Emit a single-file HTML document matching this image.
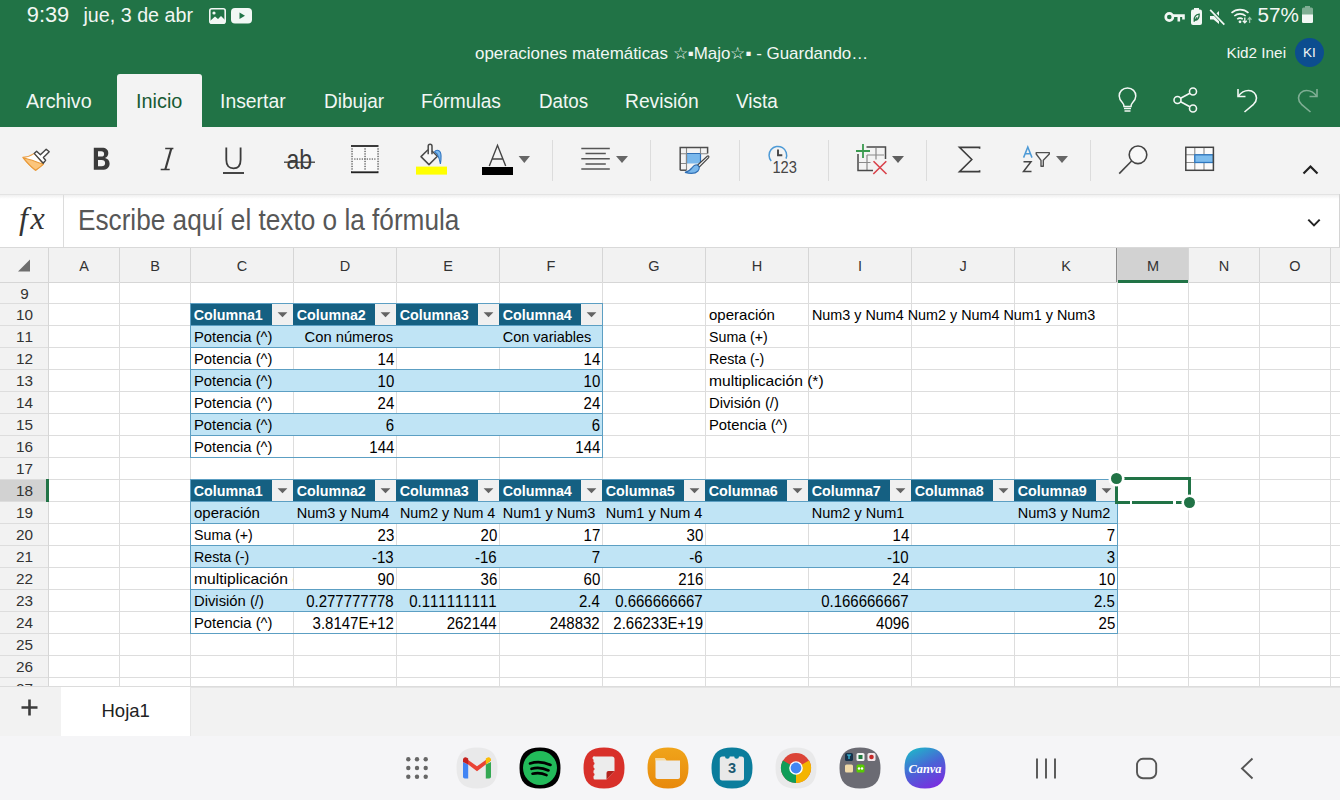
<!DOCTYPE html>
<html><head><meta charset="utf-8"><style>
html,body{margin:0;padding:0;width:1340px;height:800px;overflow:hidden;background:#fff;font-family:'Liberation Sans', sans-serif;}
</style></head><body>
<div style="position:absolute;left:0px;top:0px;width:1340px;height:127px;background:#217346"></div><div style="position:absolute;left:26.8px;top:4.25px;font-size:21.8px;line-height:21.8px;color:#f2f7f4;font-weight:400;white-space:pre;">9:39</div><div style="position:absolute;left:83.5px;top:5.92px;font-size:19.7px;line-height:19.7px;color:#f2f7f4;font-weight:400;white-space:pre;">jue, 3 de abr</div><svg style="position:absolute;left:209px;top:8px;" width="17" height="16" viewBox="0 0 17 16"><rect x="0.8" y="0.8" width="15.4" height="14.4" rx="2" fill="none" stroke="#f2f7f4" stroke-width="1.6"/><rect x="0.8" y="0.8" width="15.4" height="14.4" rx="2" fill="#f2f7f4" opacity="0"/><circle cx="5" cy="5" r="1.6" fill="#f2f7f4"/><path d="M1 13 L6 8.5 L9 11 L12 8 L16 12 V15 H1Z" fill="#f2f7f4"/></svg><svg style="position:absolute;left:231px;top:8px;" width="21" height="16" viewBox="0 0 21 16"><rect x="0" y="0" width="21" height="15.5" rx="4" fill="#f2f7f4"/><path d="M8.5 4.5 L14 7.75 L8.5 11Z" fill="#217346"/></svg><svg style="position:absolute;left:1164px;top:10px;" width="22" height="14" viewBox="0 0 22 14"><circle cx="5.3" cy="7" r="3.6" fill="none" stroke="#f2f7f4" stroke-width="2.6"/><path d="M8.6 5.6 H19.5 V9.5 M14.8 5.6 V11.6" fill="none" stroke="#f2f7f4" stroke-width="2.6"/></svg><svg style="position:absolute;left:1190px;top:8px;" width="13" height="18" viewBox="0 0 13 18"><rect x="1" y="1.6" width="11" height="15.4" rx="2" fill="#f2f7f4"/><rect x="4" y="0" width="5" height="2" fill="#f2f7f4"/><path d="M4.2 12.6 C4 8.6 6.3 6.6 9.2 6.2 C9.3 9.6 7.8 12 4.8 12.4 M3.8 13.6 L7.2 9.4" fill="none" stroke="#217346" stroke-width="1.3"/></svg><svg style="position:absolute;left:1209px;top:8px;" width="18" height="18" viewBox="0 0 18 18"><path d="M1 8 H4.5 L10 3 V16 L4.5 11.6 H1Z" fill="#f2f7f4"/><path d="M1.5 1.5 L15.5 16.5" stroke="#217346" stroke-width="3.4"/><path d="M1.2 1.8 L15.3 16.7" stroke="#f2f7f4" stroke-width="1.7"/></svg><svg style="position:absolute;left:1230px;top:7px;" width="23" height="17" viewBox="0 0 23 17"><path d="M1.5 5.8 A13 13 0 0 1 18.5 5.8" fill="none" stroke="#f2f7f4" stroke-width="1.6"/><path d="M4.3 9 A8.8 8.8 0 0 1 15.7 9" fill="none" stroke="#f2f7f4" stroke-width="1.6"/><path d="M7.2 12.2 A4.6 4.6 0 0 1 12.8 12.2" fill="none" stroke="#f2f7f4" stroke-width="1.6"/><circle cx="10" cy="14.8" r="1.4" fill="#f2f7f4"/><path d="M14.8 10.5 V16 M12.8 13.8 L14.8 15.9 L16.8 13.8" fill="none" stroke="#f2f7f4" stroke-width="1.3"/><path d="M19.6 16 V10.6 M17.7 12.6 L19.6 10.5 L21.5 12.6" fill="none" stroke="#9cc4ad" stroke-width="1.3"/></svg><div style="position:absolute;left:1257.5px;top:5.28px;font-size:20.7px;line-height:20.7px;color:#f2f7f4;font-weight:400;white-space:pre;">57%</div><svg style="position:absolute;left:1302px;top:6px;" width="12" height="17" viewBox="0 0 12 17"><rect x="0" y="1.5" width="11" height="15.5" rx="1.6" fill="#7fae93"/><rect x="3" y="0" width="5" height="2" fill="#7fae93"/><path d="M0 8.5 H11 V15.4 A1.6 1.6 0 0 1 9.4 17 H1.6 A1.6 1.6 0 0 1 0 15.4Z" fill="#f2f7f4"/></svg><div style="position:absolute;left:475px;top:46.05px;font-size:16.95px;line-height:16.95px;color:#f2f7f4;font-weight:400;white-space:pre;">operaciones matemáticas ☆▪Majo☆▪ - Guardando…</div><div style="position:absolute;left:1226.5px;top:44.85px;font-size:15.3px;line-height:15.3px;color:#f2f7f4;font-weight:400;white-space:pre;">Kid2 Inei</div><div style="position:absolute;left:1295px;top:38px;width:29px;height:29px;border-radius:50%;background:#0c4d8f"></div><div style="position:absolute;left:1295.0px;width:29px;top:45.97225px;font-size:13.5px;line-height:13.5px;color:#f2f7f4;font-weight:400;white-space:pre;text-align:center;">KI</div><div style="position:absolute;left:117px;top:74px;width:85px;height:53px;background:#f3f3f3;border-radius:3px 3px 0 0"></div><div style="position:absolute;left:26.2px;top:90.85px;font-size:20.5px;line-height:20.5px;color:#f2f7f4;font-weight:400;white-space:pre;transform:scaleX(0.960);transform-origin:0 0;">Archivo</div><div style="position:absolute;left:136.0px;top:90.85px;font-size:20.5px;line-height:20.5px;color:#175a34;font-weight:400;white-space:pre;transform:scaleX(0.969);transform-origin:0 0;">Inicio</div><div style="position:absolute;left:220.2px;top:90.85px;font-size:20.5px;line-height:20.5px;color:#f2f7f4;font-weight:400;white-space:pre;transform:scaleX(0.944);transform-origin:0 0;">Insertar</div><div style="position:absolute;left:323.7px;top:90.85px;font-size:20.5px;line-height:20.5px;color:#f2f7f4;font-weight:400;white-space:pre;transform:scaleX(0.926);transform-origin:0 0;">Dibujar</div><div style="position:absolute;left:420.9px;top:90.85px;font-size:20.5px;line-height:20.5px;color:#f2f7f4;font-weight:400;white-space:pre;transform:scaleX(0.935);transform-origin:0 0;">Fórmulas</div><div style="position:absolute;left:538.7px;top:90.85px;font-size:20.5px;line-height:20.5px;color:#f2f7f4;font-weight:400;white-space:pre;transform:scaleX(0.916);transform-origin:0 0;">Datos</div><div style="position:absolute;left:625.2px;top:90.85px;font-size:20.5px;line-height:20.5px;color:#f2f7f4;font-weight:400;white-space:pre;transform:scaleX(0.938);transform-origin:0 0;">Revisión</div><div style="position:absolute;left:736.2px;top:90.85px;font-size:20.5px;line-height:20.5px;color:#f2f7f4;font-weight:400;white-space:pre;transform:scaleX(0.923);transform-origin:0 0;">Vista</div><svg style="position:absolute;left:1117px;top:86px;" width="21" height="28" viewBox="0 0 21 28"><path d="M10.5 2 C5.5 2 2.2 5.6 2.2 10 C2.2 13 3.8 15 5.5 16.8 C6.5 17.9 7 19 7 20.5 H14 C14 19 14.5 17.9 15.5 16.8 C17.2 15 18.8 13 18.8 10 C18.8 5.6 15.5 2 10.5 2Z" fill="none" stroke="#f2f7f4" stroke-width="1.5"/><path d="M7 22.5 H14 M7.5 25 H13.5" stroke="#f2f7f4" stroke-width="1.6"/></svg><svg style="position:absolute;left:1172px;top:86px;" width="27" height="28" viewBox="0 0 27 28"><circle cx="5.5" cy="14" r="3.5" fill="none" stroke="#f2f7f4" stroke-width="1.6"/><circle cx="21" cy="5.5" r="3.5" fill="none" stroke="#f2f7f4" stroke-width="1.6"/><circle cx="21" cy="22.5" r="3.5" fill="none" stroke="#f2f7f4" stroke-width="1.6"/><path d="M8.6 12.3 L17.9 7.2 M8.6 15.7 L17.9 20.8" stroke="#f2f7f4" stroke-width="1.6"/></svg><svg style="position:absolute;left:1234px;top:86px;" width="26" height="28" viewBox="0 0 26 28"><path d="M4 3 V10.5 H11.5" fill="none" stroke="#f2f7f4" stroke-width="1.6"/><path d="M4.3 10.2 C7 6.5 10.5 4.5 14.5 4.5 C19 4.5 22.5 8 22.5 12 C22.5 14.5 21.5 16.3 19.5 18.3 L10.5 26" fill="none" stroke="#f2f7f4" stroke-width="1.6"/></svg><svg style="position:absolute;left:1295px;top:86px;" width="26" height="28" viewBox="0 0 26 28"><g opacity="0.45"><path d="M22 3 V10.5 H14.5" fill="none" stroke="#f2f7f4" stroke-width="1.6"/><path d="M21.7 10.2 C19 6.5 15.5 4.5 11.5 4.5 C7 4.5 3.5 8 3.5 12 C3.5 14.5 4.5 16.3 6.5 18.3 L15.5 26" fill="none" stroke="#f2f7f4" stroke-width="1.6"/></g></svg><div style="position:absolute;left:0px;top:127px;width:1340px;height:67px;background:#f3f3f3"></div><svg style="position:absolute;left:15px;top:140px;" width="40" height="40" viewBox="0 0 40 40">
<path d="M19.3 13.4 C15.5 16 11.5 17.2 7.8 17.4 C11.5 22 15.5 26.5 20.6 30.2 C23 28.5 25.8 26.5 28.4 24.2 Z" fill="#fff" stroke="#eaa24c" stroke-width="1.1" stroke-linejoin="round"/>
<path d="M8.4 17.8 C15 19.5 21.5 21.8 28.2 24.3 C25.8 26.5 23 28.5 20.6 30.2 C15.5 26.5 11.8 22.2 8.4 17.8 Z" fill="#fbc57c" stroke="#e99a3a" stroke-width="1.1" stroke-linejoin="round"/>
<path d="M19.2 13.4 L21.6 11.2 L25.4 14.8 L31.2 9.2 L34.2 11.8 L28.4 17.5 L30.6 20.2 L28.2 23.2 Z" fill="#fff" stroke="#444" stroke-width="1.4" stroke-linejoin="round"/>
</svg><svg style="position:absolute;left:93px;top:147px;" width="18" height="24" viewBox="0 0 18 24"><path fill-rule="evenodd" fill="#3b3b3b" d="M0.8 0.8 H9 C13 0.8 15.3 2.8 15.3 6.2 C15.3 8.5 14 10.2 12 10.9 C14.6 11.4 16.6 13.4 16.6 16.4 C16.6 20.5 13.7 22.8 9.2 22.8 H0.8 Z M5 4.3 V9.6 H8.2 C10.2 9.6 11.1 8.6 11.1 6.9 C11.1 5.2 10.2 4.3 8.2 4.3 Z M5 13 V19.3 H8.6 C10.9 19.3 12.1 18.2 12.1 16.1 C12.1 14.1 10.9 13 8.6 13 Z"/></svg><svg style="position:absolute;left:158px;top:146px;" width="20" height="26" viewBox="0 0 20 26"><path d="M7.2 2.4 H15.4 M2.7 23.4 H11.7" stroke="#3b3b3b" stroke-width="1.5"/><path d="M12.2 2.4 L14.4 2.4 L8.4 23.4 L6.2 23.4 Z" fill="#3b3b3b"/></svg><svg style="position:absolute;left:222px;top:146px;" width="24" height="30" viewBox="0 0 24 30"><path d="M4.3 1.5 V13.8 C4.3 19.5 7 22.4 11.5 22.4 C16 22.4 18.6 19.5 18.6 13.8 V1.5" fill="none" stroke="#3b3b3b" stroke-width="1.8"/><path d="M1 27 H22" stroke="#3b3b3b" stroke-width="1.9"/></svg><svg style="position:absolute;left:282px;top:146px;" width="36" height="26" viewBox="0 0 36 26"><text x="4.4" y="23.4" font-family="Liberation Sans" font-size="27.5" fill="#3b3b3b" textLength="25.6" lengthAdjust="spacingAndGlyphs">ab</text><path d="M2 16.2 H33" stroke="#3b3b3b" stroke-width="1.3"/></svg><svg style="position:absolute;left:351px;top:145px;" width="29" height="30" viewBox="0 0 29 30"><rect x="0" y="0" width="27.5" height="2" fill="#3a3a3a"/><rect x="0" y="26.2" width="27.5" height="2" fill="#222"/><rect x="1.2" y="2" width="25" height="24.2" fill="#f9f9f9"/><rect x="0.4" y="3.3" width="1.3" height="1.3" fill="#555"/><rect x="0.4" y="5.8" width="1.3" height="1.3" fill="#555"/><rect x="0.4" y="8.3" width="1.3" height="1.3" fill="#555"/><rect x="0.4" y="10.8" width="1.3" height="1.3" fill="#555"/><rect x="0.4" y="13.3" width="1.3" height="1.3" fill="#555"/><rect x="0.4" y="15.8" width="1.3" height="1.3" fill="#555"/><rect x="0.4" y="18.3" width="1.3" height="1.3" fill="#555"/><rect x="0.4" y="20.8" width="1.3" height="1.3" fill="#555"/><rect x="0.4" y="23.3" width="1.3" height="1.3" fill="#555"/><rect x="13.4" y="3.3" width="1.3" height="1.3" fill="#555"/><rect x="13.4" y="5.8" width="1.3" height="1.3" fill="#555"/><rect x="13.4" y="8.3" width="1.3" height="1.3" fill="#555"/><rect x="13.4" y="10.8" width="1.3" height="1.3" fill="#555"/><rect x="13.4" y="13.3" width="1.3" height="1.3" fill="#555"/><rect x="13.4" y="15.8" width="1.3" height="1.3" fill="#555"/><rect x="13.4" y="18.3" width="1.3" height="1.3" fill="#555"/><rect x="13.4" y="20.8" width="1.3" height="1.3" fill="#555"/><rect x="13.4" y="23.3" width="1.3" height="1.3" fill="#555"/><rect x="26.4" y="3.3" width="1.3" height="1.3" fill="#555"/><rect x="26.4" y="5.8" width="1.3" height="1.3" fill="#555"/><rect x="26.4" y="8.3" width="1.3" height="1.3" fill="#555"/><rect x="26.4" y="10.8" width="1.3" height="1.3" fill="#555"/><rect x="26.4" y="13.3" width="1.3" height="1.3" fill="#555"/><rect x="26.4" y="15.8" width="1.3" height="1.3" fill="#555"/><rect x="26.4" y="18.3" width="1.3" height="1.3" fill="#555"/><rect x="26.4" y="20.8" width="1.3" height="1.3" fill="#555"/><rect x="26.4" y="23.3" width="1.3" height="1.3" fill="#555"/><rect x="3.2" y="13.4" width="1.3" height="1.3" fill="#666"/><rect x="5.7" y="13.4" width="1.3" height="1.3" fill="#666"/><rect x="8.2" y="13.4" width="1.3" height="1.3" fill="#666"/><rect x="10.7" y="13.4" width="1.3" height="1.3" fill="#666"/><rect x="13.2" y="13.4" width="1.3" height="1.3" fill="#666"/><rect x="15.7" y="13.4" width="1.3" height="1.3" fill="#666"/><rect x="18.2" y="13.4" width="1.3" height="1.3" fill="#666"/><rect x="20.7" y="13.4" width="1.3" height="1.3" fill="#666"/><rect x="23.2" y="13.4" width="1.3" height="1.3" fill="#666"/></svg><svg style="position:absolute;left:410px;top:140px;" width="40" height="40" viewBox="0 0 40 40">
<path d="M18 9.8 L11 16.6 L19 24.6 L27.4 16.2 L22 11" fill="#f7f7f7" stroke="#4a4a4a" stroke-width="1.5" stroke-linejoin="round"/>
<path d="M18.2 14.2 V6.2 A1.9 1.9 0 0 1 22 6.2 V14.2" fill="none" stroke="#4a4a4a" stroke-width="1.5"/>
<path d="M24.6 11.8 C26 9.6 28.8 9.8 30.2 12 C31.4 14 31.2 19 30.4 24 C29.8 20 28.6 16.5 27.2 14.2 Z" fill="#7cb9ee" stroke="#2f74c0" stroke-width="1.1"/>
<rect x="6" y="26.6" width="31" height="8" fill="#ffff00"/>
</svg><svg style="position:absolute;left:480px;top:140px;" width="54" height="40" viewBox="0 0 54 40"><path d="M9.3 26 L17.5 5.3 L25.7 26 M12.3 19 H22.7" fill="none" stroke="#444" stroke-width="1.4"/><rect x="2" y="27" width="31" height="8" fill="#000"/><path d="M38.6 16 H50 L44.3 23 Z" fill="#666"/></svg><div style="position:absolute;left:552px;top:140px;width:1px;height:41px;background:#dcdcdc"></div><div style="position:absolute;left:650px;top:140px;width:1px;height:41px;background:#dcdcdc"></div><div style="position:absolute;left:739px;top:140px;width:1px;height:41px;background:#dcdcdc"></div><div style="position:absolute;left:828px;top:140px;width:1px;height:41px;background:#dcdcdc"></div><div style="position:absolute;left:926px;top:140px;width:1px;height:41px;background:#dcdcdc"></div><div style="position:absolute;left:1090px;top:140px;width:1px;height:41px;background:#dcdcdc"></div><svg style="position:absolute;left:578px;top:140px;" width="54" height="40" viewBox="0 0 54 40"><g stroke="#555" stroke-width="1.5"><path d="M3.3 8.5 H31.8 M7.5 13.6 H27.8 M3.3 18.8 H31.8 M7.5 23.9 H27.8 M3.3 28.9 H31.8"/></g><path d="M38 16 H50 L44 23 Z" fill="#666"/></svg><svg style="position:absolute;left:675px;top:140px;" width="40" height="40" viewBox="0 0 40 40">
<rect x="11.5" y="13.5" width="14" height="10" fill="#7ab8ec"/>
<path d="M11.5 23.5 V13.5 H25.5 V23.5" fill="none" stroke="#2f6fb5" stroke-width="1.2"/>
<path d="M5.2 13.8 H11.5 M5.2 23.5 H11.5 M25.5 13.8 H32.5 M11.5 7.8 V30 M25.5 7.8 V13.5" stroke="#888" stroke-width="1.1"/>
<path d="M5.2 30.2 V7.6 H32.6 V13.6" fill="none" stroke="#4d4d4d" stroke-width="1.5"/>
<path d="M5.2 30.2 H11.5" stroke="#4d4d4d" stroke-width="1.5"/>
<path d="M32.2 16.2 C33.4 15.4 34.4 16.4 33.6 17.6 L24.4 27 L22.4 25.2 Z" fill="#fafafa" stroke="#444" stroke-width="1.2"/>
<path d="M22 25 C24.5 26 25 28.5 23 31 C20.5 33.6 15 33.8 10 32.4 C13.5 31.6 15.6 29.8 17.4 27.4 C18.8 25.4 20.4 24.6 22 25 Z" fill="#7ab8ec" stroke="#2f6fb5" stroke-width="1.1"/>
</svg><svg style="position:absolute;left:760px;top:140px;" width="40" height="40" viewBox="0 0 40 40">
<path d="M11.2 21 A8.8 8.8 0 1 1 26 18.6" fill="none" stroke="#4d9ad6" stroke-width="1.5"/>
<path d="M18 9.5 V15.2 H22.3" fill="none" stroke="#454545" stroke-width="1.9"/>
<text x="12.4" y="33" font-family="Liberation Sans" font-size="17" fill="#454545" textLength="24.5" lengthAdjust="spacingAndGlyphs">123</text>
</svg><svg style="position:absolute;left:850px;top:140px;" width="60" height="40" viewBox="0 0 60 40">
<path d="M17 15 H34 M17 15 V30 M26 8 V19.5 M9 22.5 H20.5" stroke="#8a8a8a" stroke-width="1.2"/>
<path d="M16.5 7 H35.5 V19 M8 14 V30.5 H23" fill="none" stroke="#4a4a4a" stroke-width="1.5"/>
<path d="M6 11 H20 M13 4 V18" stroke="#3a9a4f" stroke-width="1.8"/>
<path d="M23.5 21.2 L36.5 34 M36.3 21.2 L23.3 34" stroke="#d9414a" stroke-width="1.6"/>
<path d="M42 16 H54 L48 23 Z" fill="#5f5f5f"/>
</svg><svg style="position:absolute;left:950px;top:140px;" width="40" height="40" viewBox="0 0 40 40"><path d="M29.6 8.7 V7.4 H9.5 L21.8 19.5 L9.5 31.6 H29.6 V30.2" fill="none" stroke="#3d3d3d" stroke-width="1.6" stroke-linejoin="miter"/></svg><svg style="position:absolute;left:1015px;top:140px;" width="60" height="40" viewBox="0 0 60 40">
<path d="M8.6 17.6 L12.8 7 L17 17.6 M10.2 13.8 H15.4" fill="none" stroke="#4d9ad6" stroke-width="1.5"/>
<path d="M8.5 21.7 H16 L8.5 31.6 H16.5" fill="none" stroke="#454545" stroke-width="1.5"/>
<path d="M21.2 12.6 H34.3 V14 L28.3 20.3 V26.3 H26 V20.3 L21.2 14 Z" fill="#f8f8f8" stroke="#505050" stroke-width="1.4" stroke-linejoin="round"/>
<path d="M41 16 H53 L47 23 Z" fill="#666"/>
</svg><svg style="position:absolute;left:1110px;top:140px;" width="50" height="40" viewBox="0 0 50 40"><circle cx="28" cy="14.8" r="8.8" fill="#f8f8f8" stroke="#444" stroke-width="1.6"/><path d="M21.6 21 L9.2 33.6" stroke="#444" stroke-width="1.6"/></svg><svg style="position:absolute;left:1175px;top:140px;" width="50" height="40" viewBox="0 0 50 40">
<rect x="10.8" y="7.3" width="27.6" height="23" fill="#fbfbfb"/>
<path d="M10.8 14.8 H38.4 M10.8 22.5 H38.4 M19.8 7.3 V30.3 M29 7.3 V30.3" stroke="#8c8c8c" stroke-width="1.1"/>
<rect x="19.8" y="14.8" width="18.6" height="7.7" fill="#7ebdee" stroke="#2f78c0" stroke-width="1.3"/>
<rect x="10.8" y="7.3" width="27.6" height="23" fill="none" stroke="#444" stroke-width="1.5"/>
</svg><svg style="position:absolute;left:1300px;top:162px;" width="22" height="14" viewBox="0 0 22 14"><path d="M3.5 11.5 L10.5 4.5 L17.5 11.5" fill="none" stroke="#222" stroke-width="2.2"/></svg><div style="position:absolute;left:0px;top:194px;width:1340px;height:54px;background:#fff;border-top:1px solid #e3e3e3;box-sizing:border-box"></div><div style="position:absolute;left:0px;top:195px;width:1340px;height:4px;background:linear-gradient(#f0f0f0,#fff)"></div><div style="position:absolute;left:63px;top:195px;width:1px;height:52px;background:#dcdcdc"></div><div style="position:absolute;left:1339px;top:194px;width:1px;height:54px;background:#d4d4d4"></div><div style="position:absolute;left:19px;top:200.5px;font-family:'Liberation Serif',serif;font-style:italic;font-size:32px;line-height:34px;color:#333;letter-spacing:2.5px">fx</div><div style="position:absolute;left:77.9px;top:205.75px;font-size:29px;line-height:29px;color:#575757;font-weight:400;white-space:pre;transform:scaleX(0.903);transform-origin:0 0;">Escribe aquí el texto o la fórmula</div><svg style="position:absolute;left:1304px;top:215px;" width="20" height="14" viewBox="0 0 20 14"><path d="M4.3 4.6 L10 10.4 L15.7 4.6" fill="none" stroke="#222" stroke-width="2"/></svg><div style="position:absolute;left:0px;top:248px;width:1340px;height:438px;background:#fff"></div><div style="position:absolute;left:0px;top:248px;width:1340px;height:34px;background:#f2f2f2"></div><div style="position:absolute;left:0px;top:247px;width:1340px;height:1px;background:#d9d9d9"></div><div style="position:absolute;left:0px;top:282px;width:1340px;height:1px;background:#d6d6d6"></div><div style="position:absolute;left:0px;top:283px;width:48px;height:403px;background:#f2f2f2"></div><div style="position:absolute;left:1117px;top:248px;width:71px;height:34px;background:#d2d2d2"></div><div style="position:absolute;left:1116px;top:248px;width:2px;height:34px;background:#8c8c8c"></div><div style="position:absolute;left:1117px;top:280px;width:71px;height:3px;background:#217346"></div><div style="position:absolute;left:0px;top:480px;width:48px;height:21px;background:#d2d2d2"></div><div style="position:absolute;left:48px;top:248px;width:1px;height:438px;background:#dddddd"></div><div style="position:absolute;left:119px;top:248px;width:1px;height:438px;background:#dddddd"></div><div style="position:absolute;left:190px;top:248px;width:1px;height:438px;background:#dddddd"></div><div style="position:absolute;left:293px;top:248px;width:1px;height:438px;background:#dddddd"></div><div style="position:absolute;left:396px;top:248px;width:1px;height:438px;background:#dddddd"></div><div style="position:absolute;left:499px;top:248px;width:1px;height:438px;background:#dddddd"></div><div style="position:absolute;left:602px;top:248px;width:1px;height:438px;background:#dddddd"></div><div style="position:absolute;left:705px;top:248px;width:1px;height:438px;background:#dddddd"></div><div style="position:absolute;left:808px;top:248px;width:1px;height:438px;background:#dddddd"></div><div style="position:absolute;left:911px;top:248px;width:1px;height:438px;background:#dddddd"></div><div style="position:absolute;left:1014px;top:248px;width:1px;height:438px;background:#dddddd"></div><div style="position:absolute;left:1117px;top:248px;width:1px;height:438px;background:#dddddd"></div><div style="position:absolute;left:1188px;top:248px;width:1px;height:438px;background:#dddddd"></div><div style="position:absolute;left:1259px;top:248px;width:1px;height:438px;background:#dddddd"></div><div style="position:absolute;left:1330px;top:248px;width:1px;height:438px;background:#dddddd"></div><div style="position:absolute;left:48px;top:248px;width:1px;height:34px;background:#d6d6d6"></div><div style="position:absolute;left:119px;top:248px;width:1px;height:34px;background:#d6d6d6"></div><div style="position:absolute;left:190px;top:248px;width:1px;height:34px;background:#d6d6d6"></div><div style="position:absolute;left:293px;top:248px;width:1px;height:34px;background:#d6d6d6"></div><div style="position:absolute;left:396px;top:248px;width:1px;height:34px;background:#d6d6d6"></div><div style="position:absolute;left:499px;top:248px;width:1px;height:34px;background:#d6d6d6"></div><div style="position:absolute;left:602px;top:248px;width:1px;height:34px;background:#d6d6d6"></div><div style="position:absolute;left:705px;top:248px;width:1px;height:34px;background:#d6d6d6"></div><div style="position:absolute;left:808px;top:248px;width:1px;height:34px;background:#d6d6d6"></div><div style="position:absolute;left:911px;top:248px;width:1px;height:34px;background:#d6d6d6"></div><div style="position:absolute;left:1014px;top:248px;width:1px;height:34px;background:#d6d6d6"></div><div style="position:absolute;left:1117px;top:248px;width:1px;height:34px;background:#d6d6d6"></div><div style="position:absolute;left:1188px;top:248px;width:1px;height:34px;background:#d6d6d6"></div><div style="position:absolute;left:1259px;top:248px;width:1px;height:34px;background:#d6d6d6"></div><div style="position:absolute;left:1330px;top:248px;width:1px;height:34px;background:#d6d6d6"></div><div style="position:absolute;left:0px;top:303px;width:1340px;height:1px;background:#dddddd"></div><div style="position:absolute;left:0px;top:325px;width:1340px;height:1px;background:#dddddd"></div><div style="position:absolute;left:0px;top:347px;width:1340px;height:1px;background:#dddddd"></div><div style="position:absolute;left:0px;top:369px;width:1340px;height:1px;background:#dddddd"></div><div style="position:absolute;left:0px;top:391px;width:1340px;height:1px;background:#dddddd"></div><div style="position:absolute;left:0px;top:413px;width:1340px;height:1px;background:#dddddd"></div><div style="position:absolute;left:0px;top:435px;width:1340px;height:1px;background:#dddddd"></div><div style="position:absolute;left:0px;top:457px;width:1340px;height:1px;background:#dddddd"></div><div style="position:absolute;left:0px;top:479px;width:1340px;height:1px;background:#dddddd"></div><div style="position:absolute;left:0px;top:501px;width:1340px;height:1px;background:#dddddd"></div><div style="position:absolute;left:0px;top:523px;width:1340px;height:1px;background:#dddddd"></div><div style="position:absolute;left:0px;top:545px;width:1340px;height:1px;background:#dddddd"></div><div style="position:absolute;left:0px;top:567px;width:1340px;height:1px;background:#dddddd"></div><div style="position:absolute;left:0px;top:589px;width:1340px;height:1px;background:#dddddd"></div><div style="position:absolute;left:0px;top:611px;width:1340px;height:1px;background:#dddddd"></div><div style="position:absolute;left:0px;top:633px;width:1340px;height:1px;background:#dddddd"></div><div style="position:absolute;left:0px;top:655px;width:1340px;height:1px;background:#dddddd"></div><div style="position:absolute;left:0px;top:677px;width:1340px;height:1px;background:#dddddd"></div><div style="position:absolute;left:48px;top:248px;width:1px;height:438px;background:#d6d6d6"></div><div style="position:absolute;left:46px;top:479px;width:3px;height:23px;background:#217346"></div><svg style="position:absolute;left:17px;top:259px;" width="14" height="13" viewBox="0 0 14 13"><path d="M13 0.5 V12.5 H1 Z" fill="#6e6e6e"/></svg><div style="position:absolute;left:54.0px;width:60px;top:258.72575px;font-size:14.5px;line-height:14.5px;color:#333;font-weight:400;white-space:pre;text-align:center;">A</div><div style="position:absolute;left:125.0px;width:60px;top:258.72575px;font-size:14.5px;line-height:14.5px;color:#333;font-weight:400;white-space:pre;text-align:center;">B</div><div style="position:absolute;left:212.0px;width:60px;top:258.72575px;font-size:14.5px;line-height:14.5px;color:#333;font-weight:400;white-space:pre;text-align:center;">C</div><div style="position:absolute;left:315.0px;width:60px;top:258.72575px;font-size:14.5px;line-height:14.5px;color:#333;font-weight:400;white-space:pre;text-align:center;">D</div><div style="position:absolute;left:418.0px;width:60px;top:258.72575px;font-size:14.5px;line-height:14.5px;color:#333;font-weight:400;white-space:pre;text-align:center;">E</div><div style="position:absolute;left:521.0px;width:60px;top:258.72575px;font-size:14.5px;line-height:14.5px;color:#333;font-weight:400;white-space:pre;text-align:center;">F</div><div style="position:absolute;left:624.0px;width:60px;top:258.72575px;font-size:14.5px;line-height:14.5px;color:#333;font-weight:400;white-space:pre;text-align:center;">G</div><div style="position:absolute;left:727.0px;width:60px;top:258.72575px;font-size:14.5px;line-height:14.5px;color:#333;font-weight:400;white-space:pre;text-align:center;">H</div><div style="position:absolute;left:830.0px;width:60px;top:258.72575px;font-size:14.5px;line-height:14.5px;color:#333;font-weight:400;white-space:pre;text-align:center;">I</div><div style="position:absolute;left:933.0px;width:60px;top:258.72575px;font-size:14.5px;line-height:14.5px;color:#333;font-weight:400;white-space:pre;text-align:center;">J</div><div style="position:absolute;left:1036.0px;width:60px;top:258.72575px;font-size:14.5px;line-height:14.5px;color:#333;font-weight:400;white-space:pre;text-align:center;">K</div><div style="position:absolute;left:1123.0px;width:60px;top:258.72575px;font-size:14.5px;line-height:14.5px;color:#333;font-weight:400;white-space:pre;text-align:center;">M</div><div style="position:absolute;left:1194.0px;width:60px;top:258.72575px;font-size:14.5px;line-height:14.5px;color:#333;font-weight:400;white-space:pre;text-align:center;">N</div><div style="position:absolute;left:1265.0px;width:60px;top:258.72575px;font-size:14.5px;line-height:14.5px;color:#333;font-weight:400;white-space:pre;text-align:center;">O</div><div style="position:absolute;left:0.5px;width:48px;top:286.21px;font-size:15.3px;line-height:15.3px;color:#333;font-weight:400;white-space:pre;text-align:center;font-kerning:none;">9</div><div style="position:absolute;left:0.5px;width:48px;top:307.21px;font-size:15.3px;line-height:15.3px;color:#333;font-weight:400;white-space:pre;text-align:center;font-kerning:none;">10</div><div style="position:absolute;left:0.5px;width:48px;top:329.21px;font-size:15.3px;line-height:15.3px;color:#333;font-weight:400;white-space:pre;text-align:center;font-kerning:none;">11</div><div style="position:absolute;left:0.5px;width:48px;top:351.21px;font-size:15.3px;line-height:15.3px;color:#333;font-weight:400;white-space:pre;text-align:center;font-kerning:none;">12</div><div style="position:absolute;left:0.5px;width:48px;top:373.21px;font-size:15.3px;line-height:15.3px;color:#333;font-weight:400;white-space:pre;text-align:center;font-kerning:none;">13</div><div style="position:absolute;left:0.5px;width:48px;top:395.21px;font-size:15.3px;line-height:15.3px;color:#333;font-weight:400;white-space:pre;text-align:center;font-kerning:none;">14</div><div style="position:absolute;left:0.5px;width:48px;top:417.21px;font-size:15.3px;line-height:15.3px;color:#333;font-weight:400;white-space:pre;text-align:center;font-kerning:none;">15</div><div style="position:absolute;left:0.5px;width:48px;top:439.21px;font-size:15.3px;line-height:15.3px;color:#333;font-weight:400;white-space:pre;text-align:center;font-kerning:none;">16</div><div style="position:absolute;left:0.5px;width:48px;top:461.21px;font-size:15.3px;line-height:15.3px;color:#333;font-weight:400;white-space:pre;text-align:center;font-kerning:none;">17</div><div style="position:absolute;left:0.5px;width:48px;top:483.21px;font-size:15.3px;line-height:15.3px;color:#333;font-weight:400;white-space:pre;text-align:center;font-kerning:none;">18</div><div style="position:absolute;left:0.5px;width:48px;top:505.21px;font-size:15.3px;line-height:15.3px;color:#333;font-weight:400;white-space:pre;text-align:center;font-kerning:none;">19</div><div style="position:absolute;left:0.5px;width:48px;top:527.21px;font-size:15.3px;line-height:15.3px;color:#333;font-weight:400;white-space:pre;text-align:center;font-kerning:none;">20</div><div style="position:absolute;left:0.5px;width:48px;top:549.21px;font-size:15.3px;line-height:15.3px;color:#333;font-weight:400;white-space:pre;text-align:center;font-kerning:none;">21</div><div style="position:absolute;left:0.5px;width:48px;top:571.21px;font-size:15.3px;line-height:15.3px;color:#333;font-weight:400;white-space:pre;text-align:center;font-kerning:none;">22</div><div style="position:absolute;left:0.5px;width:48px;top:593.21px;font-size:15.3px;line-height:15.3px;color:#333;font-weight:400;white-space:pre;text-align:center;font-kerning:none;">23</div><div style="position:absolute;left:0.5px;width:48px;top:615.21px;font-size:15.3px;line-height:15.3px;color:#333;font-weight:400;white-space:pre;text-align:center;font-kerning:none;">24</div><div style="position:absolute;left:0.5px;width:48px;top:637.21px;font-size:15.3px;line-height:15.3px;color:#333;font-weight:400;white-space:pre;text-align:center;font-kerning:none;">25</div><div style="position:absolute;left:0.5px;width:48px;top:659.21px;font-size:15.3px;line-height:15.3px;color:#333;font-weight:400;white-space:pre;text-align:center;font-kerning:none;">26</div><div style="position:absolute;left:0.5px;width:48px;top:681.21px;font-size:15.3px;line-height:15.3px;color:#333;font-weight:400;white-space:pre;text-align:center;font-kerning:none;">27</div><div style="position:absolute;left:190px;top:304px;width:412px;height:21px;background:#156082"></div><div style="position:absolute;left:190px;top:326px;width:412px;height:21px;background:#c0e4f5"></div><div style="position:absolute;left:190px;top:348px;width:412px;height:21px;background:#fff"></div><div style="position:absolute;left:293px;top:348px;width:1px;height:21px;background:#dddddd"></div><div style="position:absolute;left:396px;top:348px;width:1px;height:21px;background:#dddddd"></div><div style="position:absolute;left:499px;top:348px;width:1px;height:21px;background:#dddddd"></div><div style="position:absolute;left:190px;top:370px;width:412px;height:21px;background:#c0e4f5"></div><div style="position:absolute;left:190px;top:392px;width:412px;height:21px;background:#fff"></div><div style="position:absolute;left:293px;top:392px;width:1px;height:21px;background:#dddddd"></div><div style="position:absolute;left:396px;top:392px;width:1px;height:21px;background:#dddddd"></div><div style="position:absolute;left:499px;top:392px;width:1px;height:21px;background:#dddddd"></div><div style="position:absolute;left:190px;top:414px;width:412px;height:21px;background:#c0e4f5"></div><div style="position:absolute;left:190px;top:436px;width:412px;height:21px;background:#fff"></div><div style="position:absolute;left:293px;top:436px;width:1px;height:21px;background:#dddddd"></div><div style="position:absolute;left:396px;top:436px;width:1px;height:21px;background:#dddddd"></div><div style="position:absolute;left:499px;top:436px;width:1px;height:21px;background:#dddddd"></div><div style="position:absolute;left:190px;top:303px;width:413px;height:1px;background:#5c9fc3"></div><div style="position:absolute;left:190px;top:325px;width:413px;height:1px;background:#5c9fc3"></div><div style="position:absolute;left:190px;top:347px;width:413px;height:1px;background:#5c9fc3"></div><div style="position:absolute;left:190px;top:369px;width:413px;height:1px;background:#5c9fc3"></div><div style="position:absolute;left:190px;top:391px;width:413px;height:1px;background:#5c9fc3"></div><div style="position:absolute;left:190px;top:413px;width:413px;height:1px;background:#5c9fc3"></div><div style="position:absolute;left:190px;top:435px;width:413px;height:1px;background:#5c9fc3"></div><div style="position:absolute;left:190px;top:457px;width:413px;height:1px;background:#5c9fc3"></div><div style="position:absolute;left:190px;top:303px;width:1px;height:155px;background:#5c9fc3"></div><div style="position:absolute;left:602px;top:303px;width:1px;height:155px;background:#5c9fc3"></div><div style="position:absolute;left:272px;top:304px;width:21px;height:21px;background:#f0f0f0"></div><svg style="position:absolute;left:272px;top:304px;" width="21" height="21" viewBox="0 0 21 21"><path d="M5.6 8.2 H15.4 L10.5 13.2 Z" fill="#636363"/></svg><div style="position:absolute;left:193.7px;top:308.11px;font-size:14.3px;line-height:14.3px;color:#fff;font-weight:700;white-space:pre;">Columna1</div><div style="position:absolute;left:375px;top:304px;width:21px;height:21px;background:#f0f0f0"></div><svg style="position:absolute;left:375px;top:304px;" width="21" height="21" viewBox="0 0 21 21"><path d="M5.6 8.2 H15.4 L10.5 13.2 Z" fill="#636363"/></svg><div style="position:absolute;left:296.7px;top:308.11px;font-size:14.3px;line-height:14.3px;color:#fff;font-weight:700;white-space:pre;">Columna2</div><div style="position:absolute;left:478px;top:304px;width:21px;height:21px;background:#f0f0f0"></div><svg style="position:absolute;left:478px;top:304px;" width="21" height="21" viewBox="0 0 21 21"><path d="M5.6 8.2 H15.4 L10.5 13.2 Z" fill="#636363"/></svg><div style="position:absolute;left:399.7px;top:308.11px;font-size:14.3px;line-height:14.3px;color:#fff;font-weight:700;white-space:pre;">Columna3</div><div style="position:absolute;left:581px;top:304px;width:21px;height:21px;background:#f0f0f0"></div><svg style="position:absolute;left:581px;top:304px;" width="21" height="21" viewBox="0 0 21 21"><path d="M5.6 8.2 H15.4 L10.5 13.2 Z" fill="#636363"/></svg><div style="position:absolute;left:502.7px;top:308.11px;font-size:14.3px;line-height:14.3px;color:#fff;font-weight:700;white-space:pre;">Columna4</div><div style="position:absolute;left:193.7px;top:330.01px;font-size:14.5px;line-height:14.5px;color:#000;font-weight:400;white-space:pre;transform:scaleX(1.02);transform-origin:0 0;">Potencia (^)</div><div style="position:absolute;right:947px;top:330.01px;font-size:14.5px;line-height:14.5px;color:#000;font-weight:400;white-space:pre;text-align:right;transform:scaleX(1.016);transform-origin:100% 0;">Con números</div><div style="position:absolute;left:502.7px;top:330.01px;font-size:14.5px;line-height:14.5px;color:#000;font-weight:400;white-space:pre;">Con variables</div><div style="position:absolute;left:193.7px;top:352.01px;font-size:14.5px;line-height:14.5px;color:#000;font-weight:400;white-space:pre;transform:scaleX(1.02);transform-origin:0 0;">Potencia (^)</div><div style="position:absolute;right:946px;top:351.06px;font-size:16.4px;line-height:16.4px;color:#000;font-weight:400;white-space:pre;text-align:right;font-kerning:none;transform:scaleX(0.915);transform-origin:100% 0;">14</div><div style="position:absolute;right:740px;top:351.06px;font-size:16.4px;line-height:16.4px;color:#000;font-weight:400;white-space:pre;text-align:right;font-kerning:none;transform:scaleX(0.915);transform-origin:100% 0;">14</div><div style="position:absolute;left:193.7px;top:374.01px;font-size:14.5px;line-height:14.5px;color:#000;font-weight:400;white-space:pre;transform:scaleX(1.02);transform-origin:0 0;">Potencia (^)</div><div style="position:absolute;right:946px;top:373.06px;font-size:16.4px;line-height:16.4px;color:#000;font-weight:400;white-space:pre;text-align:right;font-kerning:none;transform:scaleX(0.915);transform-origin:100% 0;">10</div><div style="position:absolute;right:740px;top:373.06px;font-size:16.4px;line-height:16.4px;color:#000;font-weight:400;white-space:pre;text-align:right;font-kerning:none;transform:scaleX(0.915);transform-origin:100% 0;">10</div><div style="position:absolute;left:193.7px;top:396.01px;font-size:14.5px;line-height:14.5px;color:#000;font-weight:400;white-space:pre;transform:scaleX(1.02);transform-origin:0 0;">Potencia (^)</div><div style="position:absolute;right:946px;top:395.06px;font-size:16.4px;line-height:16.4px;color:#000;font-weight:400;white-space:pre;text-align:right;font-kerning:none;transform:scaleX(0.915);transform-origin:100% 0;">24</div><div style="position:absolute;right:740px;top:395.06px;font-size:16.4px;line-height:16.4px;color:#000;font-weight:400;white-space:pre;text-align:right;font-kerning:none;transform:scaleX(0.915);transform-origin:100% 0;">24</div><div style="position:absolute;left:193.7px;top:418.01px;font-size:14.5px;line-height:14.5px;color:#000;font-weight:400;white-space:pre;transform:scaleX(1.02);transform-origin:0 0;">Potencia (^)</div><div style="position:absolute;right:946px;top:417.06px;font-size:16.4px;line-height:16.4px;color:#000;font-weight:400;white-space:pre;text-align:right;font-kerning:none;transform:scaleX(0.915);transform-origin:100% 0;">6</div><div style="position:absolute;right:740px;top:417.06px;font-size:16.4px;line-height:16.4px;color:#000;font-weight:400;white-space:pre;text-align:right;font-kerning:none;transform:scaleX(0.915);transform-origin:100% 0;">6</div><div style="position:absolute;left:193.7px;top:440.01px;font-size:14.5px;line-height:14.5px;color:#000;font-weight:400;white-space:pre;transform:scaleX(1.02);transform-origin:0 0;">Potencia (^)</div><div style="position:absolute;right:946px;top:439.06px;font-size:16.4px;line-height:16.4px;color:#000;font-weight:400;white-space:pre;text-align:right;font-kerning:none;transform:scaleX(0.915);transform-origin:100% 0;">144</div><div style="position:absolute;right:740px;top:439.06px;font-size:16.4px;line-height:16.4px;color:#000;font-weight:400;white-space:pre;text-align:right;font-kerning:none;transform:scaleX(0.915);transform-origin:100% 0;">144</div><div style="position:absolute;left:190px;top:480px;width:927px;height:21px;background:#156082"></div><div style="position:absolute;left:190px;top:502px;width:927px;height:21px;background:#c0e4f5"></div><div style="position:absolute;left:190px;top:524px;width:927px;height:21px;background:#fff"></div><div style="position:absolute;left:293px;top:524px;width:1px;height:21px;background:#dddddd"></div><div style="position:absolute;left:396px;top:524px;width:1px;height:21px;background:#dddddd"></div><div style="position:absolute;left:499px;top:524px;width:1px;height:21px;background:#dddddd"></div><div style="position:absolute;left:602px;top:524px;width:1px;height:21px;background:#dddddd"></div><div style="position:absolute;left:705px;top:524px;width:1px;height:21px;background:#dddddd"></div><div style="position:absolute;left:808px;top:524px;width:1px;height:21px;background:#dddddd"></div><div style="position:absolute;left:911px;top:524px;width:1px;height:21px;background:#dddddd"></div><div style="position:absolute;left:1014px;top:524px;width:1px;height:21px;background:#dddddd"></div><div style="position:absolute;left:190px;top:546px;width:927px;height:21px;background:#c0e4f5"></div><div style="position:absolute;left:190px;top:568px;width:927px;height:21px;background:#fff"></div><div style="position:absolute;left:293px;top:568px;width:1px;height:21px;background:#dddddd"></div><div style="position:absolute;left:396px;top:568px;width:1px;height:21px;background:#dddddd"></div><div style="position:absolute;left:499px;top:568px;width:1px;height:21px;background:#dddddd"></div><div style="position:absolute;left:602px;top:568px;width:1px;height:21px;background:#dddddd"></div><div style="position:absolute;left:705px;top:568px;width:1px;height:21px;background:#dddddd"></div><div style="position:absolute;left:808px;top:568px;width:1px;height:21px;background:#dddddd"></div><div style="position:absolute;left:911px;top:568px;width:1px;height:21px;background:#dddddd"></div><div style="position:absolute;left:1014px;top:568px;width:1px;height:21px;background:#dddddd"></div><div style="position:absolute;left:190px;top:590px;width:927px;height:21px;background:#c0e4f5"></div><div style="position:absolute;left:190px;top:612px;width:927px;height:21px;background:#fff"></div><div style="position:absolute;left:293px;top:612px;width:1px;height:21px;background:#dddddd"></div><div style="position:absolute;left:396px;top:612px;width:1px;height:21px;background:#dddddd"></div><div style="position:absolute;left:499px;top:612px;width:1px;height:21px;background:#dddddd"></div><div style="position:absolute;left:602px;top:612px;width:1px;height:21px;background:#dddddd"></div><div style="position:absolute;left:705px;top:612px;width:1px;height:21px;background:#dddddd"></div><div style="position:absolute;left:808px;top:612px;width:1px;height:21px;background:#dddddd"></div><div style="position:absolute;left:911px;top:612px;width:1px;height:21px;background:#dddddd"></div><div style="position:absolute;left:1014px;top:612px;width:1px;height:21px;background:#dddddd"></div><div style="position:absolute;left:190px;top:479px;width:928px;height:1px;background:#5c9fc3"></div><div style="position:absolute;left:190px;top:501px;width:928px;height:1px;background:#5c9fc3"></div><div style="position:absolute;left:190px;top:523px;width:928px;height:1px;background:#5c9fc3"></div><div style="position:absolute;left:190px;top:545px;width:928px;height:1px;background:#5c9fc3"></div><div style="position:absolute;left:190px;top:567px;width:928px;height:1px;background:#5c9fc3"></div><div style="position:absolute;left:190px;top:589px;width:928px;height:1px;background:#5c9fc3"></div><div style="position:absolute;left:190px;top:611px;width:928px;height:1px;background:#5c9fc3"></div><div style="position:absolute;left:190px;top:633px;width:928px;height:1px;background:#5c9fc3"></div><div style="position:absolute;left:190px;top:479px;width:1px;height:155px;background:#5c9fc3"></div><div style="position:absolute;left:1117px;top:479px;width:1px;height:155px;background:#5c9fc3"></div><div style="position:absolute;left:272px;top:480px;width:21px;height:21px;background:#f0f0f0"></div><svg style="position:absolute;left:272px;top:480px;" width="21" height="21" viewBox="0 0 21 21"><path d="M5.6 8.2 H15.4 L10.5 13.2 Z" fill="#636363"/></svg><div style="position:absolute;left:193.7px;top:484.11px;font-size:14.3px;line-height:14.3px;color:#fff;font-weight:700;white-space:pre;">Columna1</div><div style="position:absolute;left:375px;top:480px;width:21px;height:21px;background:#f0f0f0"></div><svg style="position:absolute;left:375px;top:480px;" width="21" height="21" viewBox="0 0 21 21"><path d="M5.6 8.2 H15.4 L10.5 13.2 Z" fill="#636363"/></svg><div style="position:absolute;left:296.7px;top:484.11px;font-size:14.3px;line-height:14.3px;color:#fff;font-weight:700;white-space:pre;">Columna2</div><div style="position:absolute;left:478px;top:480px;width:21px;height:21px;background:#f0f0f0"></div><svg style="position:absolute;left:478px;top:480px;" width="21" height="21" viewBox="0 0 21 21"><path d="M5.6 8.2 H15.4 L10.5 13.2 Z" fill="#636363"/></svg><div style="position:absolute;left:399.7px;top:484.11px;font-size:14.3px;line-height:14.3px;color:#fff;font-weight:700;white-space:pre;">Columna3</div><div style="position:absolute;left:581px;top:480px;width:21px;height:21px;background:#f0f0f0"></div><svg style="position:absolute;left:581px;top:480px;" width="21" height="21" viewBox="0 0 21 21"><path d="M5.6 8.2 H15.4 L10.5 13.2 Z" fill="#636363"/></svg><div style="position:absolute;left:502.7px;top:484.11px;font-size:14.3px;line-height:14.3px;color:#fff;font-weight:700;white-space:pre;">Columna4</div><div style="position:absolute;left:684px;top:480px;width:21px;height:21px;background:#f0f0f0"></div><svg style="position:absolute;left:684px;top:480px;" width="21" height="21" viewBox="0 0 21 21"><path d="M5.6 8.2 H15.4 L10.5 13.2 Z" fill="#636363"/></svg><div style="position:absolute;left:605.7px;top:484.11px;font-size:14.3px;line-height:14.3px;color:#fff;font-weight:700;white-space:pre;">Columna5</div><div style="position:absolute;left:787px;top:480px;width:21px;height:21px;background:#f0f0f0"></div><svg style="position:absolute;left:787px;top:480px;" width="21" height="21" viewBox="0 0 21 21"><path d="M5.6 8.2 H15.4 L10.5 13.2 Z" fill="#636363"/></svg><div style="position:absolute;left:708.7px;top:484.11px;font-size:14.3px;line-height:14.3px;color:#fff;font-weight:700;white-space:pre;">Columna6</div><div style="position:absolute;left:890px;top:480px;width:21px;height:21px;background:#f0f0f0"></div><svg style="position:absolute;left:890px;top:480px;" width="21" height="21" viewBox="0 0 21 21"><path d="M5.6 8.2 H15.4 L10.5 13.2 Z" fill="#636363"/></svg><div style="position:absolute;left:811.7px;top:484.11px;font-size:14.3px;line-height:14.3px;color:#fff;font-weight:700;white-space:pre;">Columna7</div><div style="position:absolute;left:993px;top:480px;width:21px;height:21px;background:#f0f0f0"></div><svg style="position:absolute;left:993px;top:480px;" width="21" height="21" viewBox="0 0 21 21"><path d="M5.6 8.2 H15.4 L10.5 13.2 Z" fill="#636363"/></svg><div style="position:absolute;left:914.7px;top:484.11px;font-size:14.3px;line-height:14.3px;color:#fff;font-weight:700;white-space:pre;">Columna8</div><div style="position:absolute;left:1096px;top:480px;width:21px;height:21px;background:#f0f0f0"></div><svg style="position:absolute;left:1096px;top:480px;" width="21" height="21" viewBox="0 0 21 21"><path d="M5.6 8.2 H15.4 L10.5 13.2 Z" fill="#636363"/></svg><div style="position:absolute;left:1017.7px;top:484.11px;font-size:14.3px;line-height:14.3px;color:#fff;font-weight:700;white-space:pre;">Columna9</div><div style="position:absolute;left:193.7px;top:506.01px;font-size:14.5px;line-height:14.5px;color:#000;font-weight:400;white-space:pre;transform:scaleX(1.035);transform-origin:0 0;">operación</div><div style="position:absolute;left:296.7px;top:506.01px;font-size:14.5px;line-height:14.5px;color:#000;font-weight:400;white-space:pre;">Num3 y Num4</div><div style="position:absolute;left:399.7px;top:506.01px;font-size:14.5px;line-height:14.5px;color:#000;font-weight:400;white-space:pre;transform:scaleX(0.985);transform-origin:0 0;">Num2 y Num 4</div><div style="position:absolute;left:502.7px;top:506.01px;font-size:14.5px;line-height:14.5px;color:#000;font-weight:400;white-space:pre;">Num1 y Num3</div><div style="position:absolute;left:605.7px;top:506.01px;font-size:14.5px;line-height:14.5px;color:#000;font-weight:400;white-space:pre;">Num1 y Num 4</div><div style="position:absolute;left:811.7px;top:506.01px;font-size:14.5px;line-height:14.5px;color:#000;font-weight:400;white-space:pre;">Num2 y Num1</div><div style="position:absolute;left:1017.7px;top:506.01px;font-size:14.5px;line-height:14.5px;color:#000;font-weight:400;white-space:pre;">Num3 y Num2</div><div style="position:absolute;left:193.7px;top:528.01px;font-size:14.5px;line-height:14.5px;color:#000;font-weight:400;white-space:pre;transform:scaleX(0.98);transform-origin:0 0;">Suma (+)</div><div style="position:absolute;right:946px;top:527.06px;font-size:16.4px;line-height:16.4px;color:#000;font-weight:400;white-space:pre;text-align:right;font-kerning:none;transform:scaleX(0.915);transform-origin:100% 0;">23</div><div style="position:absolute;right:843px;top:527.06px;font-size:16.4px;line-height:16.4px;color:#000;font-weight:400;white-space:pre;text-align:right;font-kerning:none;transform:scaleX(0.915);transform-origin:100% 0;">20</div><div style="position:absolute;right:740px;top:527.06px;font-size:16.4px;line-height:16.4px;color:#000;font-weight:400;white-space:pre;text-align:right;font-kerning:none;transform:scaleX(0.915);transform-origin:100% 0;">17</div><div style="position:absolute;right:637px;top:527.06px;font-size:16.4px;line-height:16.4px;color:#000;font-weight:400;white-space:pre;text-align:right;font-kerning:none;transform:scaleX(0.915);transform-origin:100% 0;">30</div><div style="position:absolute;right:431px;top:527.06px;font-size:16.4px;line-height:16.4px;color:#000;font-weight:400;white-space:pre;text-align:right;font-kerning:none;transform:scaleX(0.915);transform-origin:100% 0;">14</div><div style="position:absolute;right:225px;top:527.06px;font-size:16.4px;line-height:16.4px;color:#000;font-weight:400;white-space:pre;text-align:right;font-kerning:none;transform:scaleX(0.915);transform-origin:100% 0;">7</div><div style="position:absolute;left:193.7px;top:550.01px;font-size:14.5px;line-height:14.5px;color:#000;font-weight:400;white-space:pre;transform:scaleX(0.98);transform-origin:0 0;">Resta (-)</div><div style="position:absolute;right:946px;top:549.06px;font-size:16.4px;line-height:16.4px;color:#000;font-weight:400;white-space:pre;text-align:right;font-kerning:none;transform:scaleX(0.915);transform-origin:100% 0;">-13</div><div style="position:absolute;right:843px;top:549.06px;font-size:16.4px;line-height:16.4px;color:#000;font-weight:400;white-space:pre;text-align:right;font-kerning:none;transform:scaleX(0.915);transform-origin:100% 0;">-16</div><div style="position:absolute;right:740px;top:549.06px;font-size:16.4px;line-height:16.4px;color:#000;font-weight:400;white-space:pre;text-align:right;font-kerning:none;transform:scaleX(0.915);transform-origin:100% 0;">7</div><div style="position:absolute;right:637px;top:549.06px;font-size:16.4px;line-height:16.4px;color:#000;font-weight:400;white-space:pre;text-align:right;font-kerning:none;transform:scaleX(0.915);transform-origin:100% 0;">-6</div><div style="position:absolute;right:431px;top:549.06px;font-size:16.4px;line-height:16.4px;color:#000;font-weight:400;white-space:pre;text-align:right;font-kerning:none;transform:scaleX(0.915);transform-origin:100% 0;">-10</div><div style="position:absolute;right:225px;top:549.06px;font-size:16.4px;line-height:16.4px;color:#000;font-weight:400;white-space:pre;text-align:right;font-kerning:none;transform:scaleX(0.915);transform-origin:100% 0;">3</div><div style="position:absolute;left:191px;top:568px;width:102px;height:21px;overflow:hidden"><div style="position:absolute;left:2.7px;top:4.009999999999991px;font-size:14.5px;line-height:14.5px;color:#000;font-weight:400;white-space:pre;transform:scaleX(1.078);transform-origin:0 0;">multiplicación (*)</div></div><div style="position:absolute;right:946px;top:571.06px;font-size:16.4px;line-height:16.4px;color:#000;font-weight:400;white-space:pre;text-align:right;font-kerning:none;transform:scaleX(0.915);transform-origin:100% 0;">90</div><div style="position:absolute;right:843px;top:571.06px;font-size:16.4px;line-height:16.4px;color:#000;font-weight:400;white-space:pre;text-align:right;font-kerning:none;transform:scaleX(0.915);transform-origin:100% 0;">36</div><div style="position:absolute;right:740px;top:571.06px;font-size:16.4px;line-height:16.4px;color:#000;font-weight:400;white-space:pre;text-align:right;font-kerning:none;transform:scaleX(0.915);transform-origin:100% 0;">60</div><div style="position:absolute;right:637px;top:571.06px;font-size:16.4px;line-height:16.4px;color:#000;font-weight:400;white-space:pre;text-align:right;font-kerning:none;transform:scaleX(0.915);transform-origin:100% 0;">216</div><div style="position:absolute;right:431px;top:571.06px;font-size:16.4px;line-height:16.4px;color:#000;font-weight:400;white-space:pre;text-align:right;font-kerning:none;transform:scaleX(0.915);transform-origin:100% 0;">24</div><div style="position:absolute;right:225px;top:571.06px;font-size:16.4px;line-height:16.4px;color:#000;font-weight:400;white-space:pre;text-align:right;font-kerning:none;transform:scaleX(0.915);transform-origin:100% 0;">10</div><div style="position:absolute;left:193.7px;top:594.01px;font-size:14.5px;line-height:14.5px;color:#000;font-weight:400;white-space:pre;transform:scaleX(1.02);transform-origin:0 0;">División (/)</div><div style="position:absolute;right:946px;top:593.06px;font-size:16.4px;line-height:16.4px;color:#000;font-weight:400;white-space:pre;text-align:right;font-kerning:none;transform:scaleX(0.915);transform-origin:100% 0;">0.277777778</div><div style="position:absolute;right:843px;top:593.06px;font-size:16.4px;line-height:16.4px;color:#000;font-weight:400;white-space:pre;text-align:right;font-kerning:none;transform:scaleX(0.915);transform-origin:100% 0;">0.111111111</div><div style="position:absolute;right:740px;top:593.06px;font-size:16.4px;line-height:16.4px;color:#000;font-weight:400;white-space:pre;text-align:right;font-kerning:none;transform:scaleX(0.915);transform-origin:100% 0;">2.4</div><div style="position:absolute;right:637px;top:593.06px;font-size:16.4px;line-height:16.4px;color:#000;font-weight:400;white-space:pre;text-align:right;font-kerning:none;transform:scaleX(0.915);transform-origin:100% 0;">0.666666667</div><div style="position:absolute;right:431px;top:593.06px;font-size:16.4px;line-height:16.4px;color:#000;font-weight:400;white-space:pre;text-align:right;font-kerning:none;transform:scaleX(0.915);transform-origin:100% 0;">0.166666667</div><div style="position:absolute;right:225px;top:593.06px;font-size:16.4px;line-height:16.4px;color:#000;font-weight:400;white-space:pre;text-align:right;font-kerning:none;transform:scaleX(0.915);transform-origin:100% 0;">2.5</div><div style="position:absolute;left:193.7px;top:616.01px;font-size:14.5px;line-height:14.5px;color:#000;font-weight:400;white-space:pre;transform:scaleX(1.02);transform-origin:0 0;">Potencia (^)</div><div style="position:absolute;right:946px;top:615.06px;font-size:16.4px;line-height:16.4px;color:#000;font-weight:400;white-space:pre;text-align:right;font-kerning:none;transform:scaleX(0.915);transform-origin:100% 0;">3.8147E+12</div><div style="position:absolute;right:843px;top:615.06px;font-size:16.4px;line-height:16.4px;color:#000;font-weight:400;white-space:pre;text-align:right;font-kerning:none;transform:scaleX(0.915);transform-origin:100% 0;">262144</div><div style="position:absolute;right:740px;top:615.06px;font-size:16.4px;line-height:16.4px;color:#000;font-weight:400;white-space:pre;text-align:right;font-kerning:none;transform:scaleX(0.915);transform-origin:100% 0;">248832</div><div style="position:absolute;right:637px;top:615.06px;font-size:16.4px;line-height:16.4px;color:#000;font-weight:400;white-space:pre;text-align:right;font-kerning:none;transform:scaleX(0.915);transform-origin:100% 0;">2.66233E+19</div><div style="position:absolute;right:431px;top:615.06px;font-size:16.4px;line-height:16.4px;color:#000;font-weight:400;white-space:pre;text-align:right;font-kerning:none;transform:scaleX(0.915);transform-origin:100% 0;">4096</div><div style="position:absolute;right:225px;top:615.06px;font-size:16.4px;line-height:16.4px;color:#000;font-weight:400;white-space:pre;text-align:right;font-kerning:none;transform:scaleX(0.915);transform-origin:100% 0;">25</div><div style="position:absolute;left:708.7px;top:308.01px;font-size:14.5px;line-height:14.5px;color:#000;font-weight:400;white-space:pre;transform:scaleX(1.035);transform-origin:0 0;">operación</div><div style="position:absolute;left:811.7px;top:308.01px;font-size:14.5px;line-height:14.5px;color:#000;font-weight:400;white-space:pre;transform:scaleX(0.99);transform-origin:0 0;">Num3 y Num4 Num2 y Num4 Num1 y Num3</div><div style="position:absolute;left:708.7px;top:330.01px;font-size:14.5px;line-height:14.5px;color:#000;font-weight:400;white-space:pre;transform:scaleX(0.98);transform-origin:0 0;">Suma (+)</div><div style="position:absolute;left:708.7px;top:352.01px;font-size:14.5px;line-height:14.5px;color:#000;font-weight:400;white-space:pre;transform:scaleX(0.98);transform-origin:0 0;">Resta (-)</div><div style="position:absolute;left:708.7px;top:374.01px;font-size:14.5px;line-height:14.5px;color:#000;font-weight:400;white-space:pre;transform:scaleX(1.078);transform-origin:0 0;">multiplicación (*)</div><div style="position:absolute;left:708.7px;top:396.01px;font-size:14.5px;line-height:14.5px;color:#000;font-weight:400;white-space:pre;transform:scaleX(1.02);transform-origin:0 0;">División (/)</div><div style="position:absolute;left:708.7px;top:418.01px;font-size:14.5px;line-height:14.5px;color:#000;font-weight:400;white-space:pre;transform:scaleX(1.02);transform-origin:0 0;">Potencia (^)</div><div style="position:absolute;left:1115px;top:477px;width:76px;height:3px;background:#217346"></div><div style="position:absolute;left:1115px;top:477px;width:3px;height:27px;background:#217346"></div><div style="position:absolute;left:1188px;top:477px;width:3px;height:27px;background:#217346"></div><div style="position:absolute;left:1115px;top:501px;width:70px;height:3px;background:#217346"></div><div style="position:absolute;left:1129.5px;top:500px;width:2.5px;height:5px;background:#fff"></div><div style="position:absolute;left:1173px;top:500px;width:2.5px;height:5px;background:#fff"></div><div style="position:absolute;left:1111px;top:473px;width:11px;height:11px;border-radius:50%;background:#217346;box-shadow:0 0 0 2.6px #fff"></div><div style="position:absolute;left:1184px;top:497px;width:11px;height:11px;border-radius:50%;background:#217346;box-shadow:0 0 0 2.6px #fff"></div><div style="position:absolute;left:0px;top:686px;width:1340px;height:50px;background:#f2f2f2"></div><div style="position:absolute;left:0px;top:686px;width:1340px;height:1px;background:#dcdcdc"></div><div style="position:absolute;left:190px;top:687px;width:1150px;height:1px;background:#e4e4e4"></div><div style="position:absolute;left:61px;top:687px;width:129px;height:49px;background:#fff"></div><div style="position:absolute;left:190px;top:687px;width:1px;height:49px;background:#e6e6e6"></div><svg style="position:absolute;left:20px;top:698px;" width="19" height="19" viewBox="0 0 19 19"><path d="M9.5 1.5 V17.5 M1.5 9.5 H17.5" stroke="#3c3c3c" stroke-width="2.6"/></svg><div style="position:absolute;left:101.5px;top:702.34px;font-size:18.5px;line-height:18.5px;color:#222;font-weight:400;white-space:pre;">Hoja1</div><div style="position:absolute;left:0px;top:736px;width:1340px;height:64px;background:#f5f5f7"></div><svg style="position:absolute;left:406px;top:757px;" width="23" height="23" viewBox="0 0 23 23"><circle cx="2.3" cy="2.3" r="2.2" fill="#666"/><circle cx="2.3" cy="11.0" r="2.2" fill="#666"/><circle cx="2.3" cy="19.7" r="2.2" fill="#666"/><circle cx="11.0" cy="2.3" r="2.2" fill="#666"/><circle cx="11.0" cy="11.0" r="2.2" fill="#666"/><circle cx="11.0" cy="19.7" r="2.2" fill="#666"/><circle cx="19.7" cy="2.3" r="2.2" fill="#666"/><circle cx="19.7" cy="11.0" r="2.2" fill="#666"/><circle cx="19.7" cy="19.7" r="2.2" fill="#666"/></svg><svg style="position:absolute;left:455.5px;top:746.5px;" width="42" height="42" viewBox="0 0 42 42"><path d="M21 0.5 C35 0.5 41.5 7 41.5 21 C41.5 35 35 41.5 21 41.5 C7 41.5 0.5 35 0.5 21 C0.5 7 7 0.5 21 0.5Z" fill="#e9e9ea"/><path d="M7 15 V29.8 A1.8 1.8 0 0 0 8.8 31.6 H12.2 V17.5Z" fill="#4285f4"/><path d="M29.8 17.5 V31.6 H33.2 A1.8 1.8 0 0 0 35 29.8 V15Z" fill="#34a853"/><path d="M7 13.5 L21 24.2 L35 13.5 L33 10.8 L21 19.2 L9 10.8Z" fill="#ea4335"/><path d="M29.8 17.5 L35 13.5 V12.8 C35 10.5 32.6 9.6 31 10.8 L29.8 11.6Z" fill="#fbbc04"/><path d="M7 15 V12.8 C7 10.5 9.4 9.6 11 10.8 L12.2 11.6 V17.5Z" fill="#c5221f"/></svg><svg style="position:absolute;left:519px;top:746.5px;" width="42" height="42" viewBox="0 0 42 42"><path d="M21 0.5 C35 0.5 41.5 7 41.5 21 C41.5 35 35 41.5 21 41.5 C7 41.5 0.5 35 0.5 21 C0.5 7 7 0.5 21 0.5Z" fill="#000"/><circle cx="21" cy="21" r="17" fill="#22ba5a"/><path d="M11 16.5 C17 14.5 25 15 31.5 18 M12.5 21.8 C17.5 20.3 24 20.8 29.5 23.5 M13.5 26.8 C18 25.7 23 26 27.5 28.2" fill="none" stroke="#000" stroke-width="2.6" stroke-linecap="round"/></svg><svg style="position:absolute;left:583px;top:746.5px;" width="42" height="42" viewBox="0 0 42 42"><path d="M21 0.5 C35 0.5 41.5 7 41.5 21 C41.5 35 35 41.5 21 41.5 C7 41.5 0.5 35 0.5 21 C0.5 7 7 0.5 21 0.5Z" fill="#d8302a"/><path d="M12 9.5 H29 A2.5 2.5 0 0 1 31.5 12 V24 L23.5 32.5 H12 A1.5 1.5 0 0 1 10.5 31 V29 A1.6 1.6 0 0 0 10.5 26 V23.5 A1.6 1.6 0 0 0 10.5 20.5 V18 A1.6 1.6 0 0 0 10.5 15 V12.5 A1.5 1.5 0 0 1 12 9.5Z" fill="#ececec"/><path d="M23.5 32.5 V26 A2 2 0 0 1 25.5 24 H31.5Z" fill="#b3221d"/></svg><svg style="position:absolute;left:647px;top:746.5px;" width="42" height="42" viewBox="0 0 42 42"><defs><linearGradient id="go" x1="0" y1="0" x2="0" y2="1"><stop offset="0" stop-color="#f0a41a"/><stop offset="1" stop-color="#e8890c"/></linearGradient></defs><path d="M21 0.5 C35 0.5 41.5 7 41.5 21 C41.5 35 35 41.5 21 41.5 C7 41.5 0.5 35 0.5 21 C0.5 7 7 0.5 21 0.5Z" fill="url(#go)"/><path d="M8.5 11 H17 L19.5 13.5 H33 V30 C33 31 32 32 31 32 H10.5 C9.5 32 8.5 31 8.5 30Z" fill="#ececec"/><path d="M8.5 11 H17 L19.5 13.5 H8.5Z" fill="#f5d9a0"/></svg><svg style="position:absolute;left:711px;top:746.5px;" width="42" height="42" viewBox="0 0 42 42"><path d="M21 0.5 C35 0.5 41.5 7 41.5 21 C41.5 35 35 41.5 21 41.5 C7 41.5 0.5 35 0.5 21 C0.5 7 7 0.5 21 0.5Z" fill="#0b7d9c"/><path d="M11.3 9.4 H14 A2.4 2.4 0 0 0 18.8 9.4 H23.2 A2.4 2.4 0 0 0 28 9.4 H30.5 A2.5 2.5 0 0 1 33 11.9 V31 A2.5 2.5 0 0 1 30.5 33.5 H11.3 A2.5 2.5 0 0 1 8.8 31 V11.9 A2.5 2.5 0 0 1 11.3 9.4Z" fill="#e9e9e9"/><text x="21" y="26.4" text-anchor="middle" font-family="Liberation Sans" font-weight="700" font-size="14.5" fill="#1b5a72">3</text></svg><svg style="position:absolute;left:775px;top:746.5px;" width="42" height="42" viewBox="0 0 42 42"><path d="M21 0.5 C35 0.5 41.5 7 41.5 21 C41.5 35 35 41.5 21 41.5 C7 41.5 0.5 35 0.5 21 C0.5 7 7 0.5 21 0.5Z" fill="#e9e9ea"/><circle cx="21" cy="21" r="15" fill="#db4437"/><path d="M21 21 L34 13.5 A15 15 0 0 1 21 36 Z" fill="#f4b400"/><path d="M21 21 L21 36 A15 15 0 0 1 8 13.5 Z" fill="#0f9d58"/><circle cx="21" cy="21" r="6.8" fill="#fff"/><circle cx="21" cy="21" r="5.4" fill="#4285f4"/></svg><svg style="position:absolute;left:839px;top:746.5px;" width="42" height="42" viewBox="0 0 42 42"><path d="M21 0.5 C35 0.5 41.5 7 41.5 21 C41.5 35 35 41.5 21 41.5 C7 41.5 0.5 35 0.5 21 C0.5 7 7 0.5 21 0.5Z" fill="#6b6b73"/><rect x="6" y="6" width="8" height="8" rx="1.6" fill="#16324a"/><path d="M8 8 h4 M10 8 v4" stroke="#3cc6e8" stroke-width="1.2"/><rect x="17.5" y="6" width="8" height="8" rx="1.6" fill="#f4f4f4"/><rect x="19.5" y="8" width="4" height="4" fill="#1f7a3f"/><rect x="28.5" y="6" width="8" height="8" rx="1.6" fill="#f1e6ea"/><circle cx="32.5" cy="10" r="2.3" fill="#c62828"/><rect x="6" y="17.5" width="8" height="8" rx="1.6" fill="#f0d9a8"/><rect x="17.5" y="17.5" width="8" height="8" rx="1.6" fill="#58cc02"/><circle cx="20" cy="21.5" r="1.2" fill="#fff"/><circle cx="23" cy="21.5" r="1.2" fill="#fff"/></svg><svg style="position:absolute;left:903.5px;top:746.5px;" width="42" height="42" viewBox="0 0 42 42"><defs><linearGradient id="gc" x1="0.2" y1="0" x2="0.7" y2="1"><stop offset="0" stop-color="#1fb6c9"/><stop offset="0.5" stop-color="#4a63d6"/><stop offset="1" stop-color="#7a2ee0"/></linearGradient></defs><path d="M21 0.5 C35 0.5 41.5 7 41.5 21 C41.5 35 35 41.5 21 41.5 C7 41.5 0.5 35 0.5 21 C0.5 7 7 0.5 21 0.5Z" fill="url(#gc)"/><text x="21" y="25.5" text-anchor="middle" font-family="Liberation Serif" font-style="italic" font-weight="700" font-size="13.5" fill="#fff" textLength="33" lengthAdjust="spacingAndGlyphs">Canva</text></svg><svg style="position:absolute;left:1034px;top:756px;" width="26" height="25" viewBox="0 0 26 25"><path d="M3 2.5 V22.5 M12 2.5 V22.5 M21 2.5 V22.5" stroke="#555" stroke-width="1.9"/></svg><svg style="position:absolute;left:1134px;top:756px;" width="26" height="25" viewBox="0 0 26 25"><rect x="3" y="2.8" width="19.2" height="19.5" rx="6" fill="none" stroke="#555" stroke-width="1.9"/></svg><svg style="position:absolute;left:1238px;top:756px;" width="20" height="25" viewBox="0 0 20 25"><path d="M14.5 2.5 L4 12.5 L14.5 22.5" fill="none" stroke="#555" stroke-width="1.9"/></svg>
</body></html>
